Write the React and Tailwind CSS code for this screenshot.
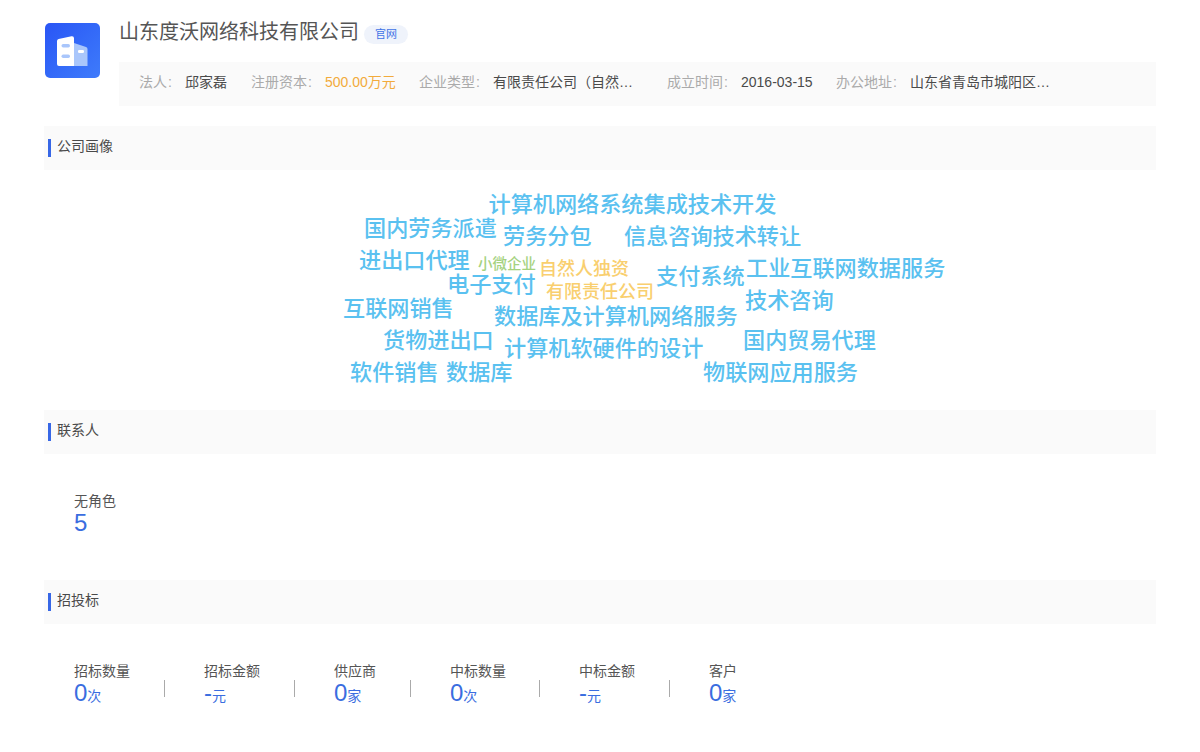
const font = { fontFamily: '"Liberation Sans", "Noto Sans CJK SC", sans-serif' }

const infoItems = [
  { label: '法人', value: '邱家磊', labelW: 'w-[46px]', valueW: 'w-[66px]', valueClass: 'text-[#4a4a4a]' },
  { label: '注册资本', value: '500.00万元', labelW: 'w-[74px]', valueW: 'w-[94px]', valueClass: 'text-[#f2ab3c]' },
  { label: '企业类型', value: '有限责任公司（自然…', labelW: 'w-[74px]', valueW: 'w-[174px]', valueClass: 'text-[#4a4a4a]' },
  { label: '成立时间', value: '2016-03-15', labelW: 'w-[74px]', valueW: 'w-[95px]', valueClass: 'text-[#4a4a4a]' },
  { label: '办公地址', value: '山东省青岛市城阳区…', labelW: 'w-[74px]', valueW: 'w-[140px]', valueClass: 'text-[#4a4a4a]' },
]

const words = [
  { t: '计算机网络系统集成技术开发', x: 444.5, y: 21, s: 22.15, c: '#5ac1f0' },
  { t: '国内劳务派遣', x: 320, y: 45, s: 22.15, c: '#5ac1f0' },
  { t: '劳务分包', x: 459, y: 53, s: 22.15, c: '#5ac1f0' },
  { t: '信息咨询技术转让', x: 580, y: 53, s: 22.15, c: '#5ac1f0' },
  { t: '进出口代理', x: 315, y: 77, s: 22.15, c: '#5ac1f0' },
  { t: '小微企业', x: 434, y: 80, s: 14.5, c: '#a5d27f' },
  { t: '自然人独资', x: 495, y: 85, s: 18, c: '#f9cf6f' },
  { t: '支付系统', x: 612, y: 93, s: 22.15, c: '#5ac1f0' },
  { t: '工业互联网数据服务', x: 702, y: 85, s: 22.15, c: '#5ac1f0' },
  { t: '电子支付', x: 403, y: 101, s: 22.15, c: '#5ac1f0' },
  { t: '有限责任公司', x: 502, y: 108, s: 18, c: '#f9cf6f' },
  { t: '技术咨询', x: 701, y: 117, s: 22.15, c: '#5ac1f0' },
  { t: '互联网销售', x: 299, y: 125, s: 22.15, c: '#5ac1f0' },
  { t: '数据库及计算机网络服务', x: 450, y: 133, s: 22.15, c: '#5ac1f0' },
  { t: '货物进出口', x: 339, y: 157, s: 22.15, c: '#5ac1f0' },
  { t: '计算机软硬件的设计', x: 460, y: 165, s: 22.15, c: '#5ac1f0' },
  { t: '国内贸易代理', x: 699, y: 157, s: 22.15, c: '#5ac1f0' },
  { t: '软件销售', x: 306, y: 189, s: 22.15, c: '#5ac1f0' },
  { t: '数据库', x: 402, y: 189, s: 22.15, c: '#5ac1f0' },
  { t: '物联网应用服务', x: 659, y: 189, s: 22.15, c: '#5ac1f0' },
]

const bidStats = [
  { label: '招标数量', value: '0', unit: '次', w: 'w-[130px]' },
  { label: '招标金额', value: '-', unit: '元', w: 'w-[130px]' },
  { label: '供应商', value: '0', unit: '家', w: 'w-[116px]' },
  { label: '中标数量', value: '0', unit: '次', w: 'w-[129px]' },
  { label: '中标金额', value: '-', unit: '元', w: 'w-[130px]' },
  { label: '客户', value: '0', unit: '家', w: 'w-[130px]', last: true },
]

function CompanyLogo() {
  return (
    <div className="flex h-[55px] w-[55px] shrink-0 items-center justify-center rounded-[5px] bg-gradient-to-br from-[#2a55f5] to-[#3f7bfb]">
      <svg viewBox="0 0 31 30" className="h-[30px] w-[31px]">
        <path d="M17 7 L29 11 Q30.5 11.6 30.5 13 V30 H17 Z" fill="#a9c6fb" />
        <path d="M0 5 Q0 3.4 1.6 3.1 L14.5 0.3 Q17 0 17 2.2 V30 H2 Q0 30 0 28 Z" fill="#fff" />
        <rect x="4.5" y="8" width="8.5" height="3.4" rx="1.7" fill="#a9c6fb" />
        <rect x="4.5" y="18.5" width="8.5" height="3.4" rx="1.7" fill="#a9c6fb" />
        <rect x="21" y="14" width="6" height="3" rx="1.2" fill="#fff" />
      </svg>
    </div>
  )
}

function SectionHeader({ title }) {
  return (
    <div className="flex h-[44px] items-start bg-[#fafafa] pl-[4px] pt-[13px]">
      <span className="h-[18px] w-[3px] bg-[#3767e6]" />
      <span className="ml-[6px] text-[14px] leading-[14px] text-[#4a4a4a]">{title}</span>
    </div>
  )
}

function App() {
  return (
    <div className="h-[752px] w-[1200px] overflow-hidden bg-white pl-[44px] pr-[44px]" style={font}>
      <div className="flex gap-[19px] pl-[1px] pt-[20px]">
        <div className="pt-[3px]">
          <CompanyLogo />
        </div>
        <div className="flex-1">
          <div className="flex h-[22px] items-center">
            <span className="mt-[1px] text-[20px] leading-[22px] text-[#555]">山东度沃网络科技有限公司</span>
            <span className="ml-[5px] mt-[6px] flex h-[19px] w-[44px] items-center justify-center rounded-full bg-[#eff3fb] text-[11px] text-[#3f74e6]">
              官网
            </span>
          </div>
          <div className="mt-[20px] flex h-[44px] items-center bg-[#fafafa] pb-[4px] pl-[20px] text-[14px]">
            {infoItems.map((item) => (
              <div key={item.label} className="flex items-center">
                <span className={`${item.labelW} shrink-0 text-[#aaa]`}>
                  {item.label}
                  <span className="ml-[1px]">:</span>
                </span>
                <span className={`${item.valueW} ${item.valueClass}`}>{item.value}</span>
              </div>
            ))}
          </div>
        </div>
      </div>

      <div className="mt-[20px]">
        <SectionHeader title="公司画像" />
        <div className="relative h-[240px] font-medium">
          {words.map((w) => (
            <span
              key={w.t}
              className="absolute -translate-y-1/2 whitespace-nowrap leading-none"
              style={{ left: w.x, top: w.y + 14, fontSize: w.s, color: w.c }}
            >
              {w.t}
            </span>
          ))}
        </div>
      </div>

      <SectionHeader title="联系人" />
      <div className="h-[126px] pl-[30px] pt-[37px]">
        <div className="text-[14px] leading-[20px] text-[#555]">无角色</div>
        <div className="text-[24px] leading-[24px] text-[#3a6de0]">5</div>
      </div>

      <SectionHeader title="招投标" />
      <div className="flex pl-[30px] pt-[37px]">
        {bidStats.map((s) => (
          <div key={s.label} className={`relative ${s.w}`}>
            <div className="text-[14px] leading-[20px] text-[#555]">{s.label}</div>
            <div className="flex items-baseline leading-[24px] text-[#3a6de0]">
              <span className="text-[24px] leading-[24px]">{s.value}</span>
              <span className="text-[14px]">{s.unit}</span>
            </div>
            {!s.last && <span className="absolute right-[39px] top-[19px] h-[17px] w-px bg-[#aaa]" />}
          </div>
        ))}
      </div>
    </div>
  )
}

export default App
